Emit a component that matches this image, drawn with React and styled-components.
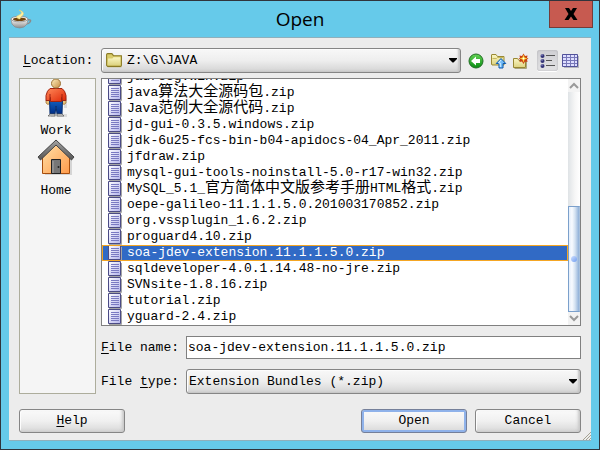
import React, { useState } from 'react';
import styled, { createGlobalStyle, css } from 'styled-components';

const GlobalStyle = createGlobalStyle`
  *, *::before, *::after { box-sizing: border-box; }
  body { margin: 0; }
  body, button, input, select {
    font-family: "Liberation Mono", "Noto Sans CJK SC", monospace;
    font-size: 13px;
    line-height: 16px;
    color: #000;
  }
`;

const Window = styled.div`
  display: flex;
  flex-direction: column;
  height: 100vh;
  min-height: 360px;
  padding: 0 8px 8px;
  border: 1px solid #30343c;
  background: #66caea;
`;

const TitleBar = styled.header`
  display: grid;
  grid-template-columns: 48px 1fr 48px;
  flex: none;
  height: 36px;
`;

const AppIcon = styled.svg`
  width: 22px;
  height: 22px;
  margin: 7px 0 0 1px;
`;

const Title = styled.h1`
  margin: 0;
  font: 400 19px/36px "Open Sans", "Noto Sans", sans-serif;
  text-align: center;
`;

const CloseButton = styled.button`
  display: grid;
  place-items: center;
  width: 44px;
  height: 27px;
  margin-left: 6px;
  padding: 0;
  border: 1px solid #743c3a;
  border-top: 0;
  background: #c75a50;
`;

const Content = styled.main`
  position: relative;
  display: flex;
  flex: 1;
  flex-direction: column;
  min-height: 0;
  padding: 10px 10px 7px;
  border: 1px solid #8fb0bc;
  border-width: 1px 0;
  background: #ececec;
`;

const LocationRow = styled.div`
  display: flex;
  flex: none;
  align-items: center;
  height: 25px;
  margin-bottom: 5px;
  padding-left: 4px;
`;

const Label = styled.label`
  flex: none;
  width: ${(p) => p.$width};
  white-space: pre;
`;

const Key = styled.span`
  text-decoration: underline;
  text-underline-offset: 2px;
`;

const Combo = styled.div`
  position: relative;
  flex: 1;
  height: 25px;
`;

const Select = styled.select`
  appearance: none;
  width: 100%;
  height: 100%;
  padding: 0 24px 0 ${(p) => (p.$withIcon ? '25px' : '2px')};
  border: 1px solid #858585;
  border-radius: 3px;
  background: linear-gradient(#f8f8f8, #eeeeee 50%, #d3d3d3);
  box-shadow: inset -2px -1px 2px #c4c4c4, inset 1px 1px 0 #fff;
  outline: none;
`;

const ComboArrow = styled.svg`
  position: absolute;
  top: 10px;
  right: 4px;
  width: 8px;
  height: 5px;
  pointer-events: none;
`;

const ComboIcon = styled.svg`
  position: absolute;
  top: 4px;
  left: 4px;
  width: 18px;
  height: 16px;
  pointer-events: none;
`;

const Tools = styled.div`
  display: flex;
  flex: none;
  align-items: center;
  gap: 2px;
  margin: 0 1px 0 5px;
`;

const ToolButton = styled.button`
  display: grid;
  place-items: center;
  width: 20px;
  height: 20px;
  padding: 0;
  border: 0;
  border-radius: 3px;
  background: none;
  ${(p) => p.$pressed && css`
    width: 21px;
    height: 21px;
    background: linear-gradient(#cfcfd3, #e2e2e4);
    box-shadow: inset 0 0 2px #a8a8ac, 0 1px 0 #fff;
  `}
`;

const ToolGap = styled.span`
  width: 3px;
`;

const Body = styled.div`
  display: flex;
  flex: 1;
  gap: 5px;
  min-height: 0;
`;

const Places = styled.nav`
  display: flex;
  flex: none;
  flex-direction: column;
  width: 77px;
  border: 1px solid #adad9c;
  background: #f5f5f5;
`;

const Place = styled.button`
  display: flex;
  flex-direction: column;
  align-items: center;
  height: 60px;
  padding: 0 3px 0 0;
  border: 0;
  background: none;
  svg { display: block; margin-bottom: 4px; }
`;

const Main = styled.div`
  display: flex;
  flex: 1;
  flex-direction: column;
  gap: 10px;
  min-width: 0;
`;

const FileBox = styled.div`
  display: flex;
  flex: 1;
  min-height: 0;
  border: 1px solid #808080;
  background: #fff;
`;

const FileList = styled.ul`
  display: flex;
  flex: 1;
  flex-direction: column;
  justify-content: flex-end;
  min-width: 0;
  margin: 0;
  padding: 0;
  overflow: hidden;
  list-style: none;
`;

const FileRow = styled.li`
  display: flex;
  flex: none;
  align-items: center;
  gap: 5px;
  height: 16px;
  padding-left: 6px;
  white-space: pre;
  ${(p) => p.$selected && css`
    background: #316ac5;
    outline: 1px solid #f5a623;
    outline-offset: -1px;
    color: #fff;
  `}
  svg { flex: none; }
`;

const Cjk = styled.span`
  font-size: 15px;
  line-height: 1;
`;

const Scrollbar = styled.div`
  display: flex;
  flex: none;
  flex-direction: column;
  width: 12px;
  background: linear-gradient(90deg, #dfe3e6, #f7f7f7 60%, #fff);
`;

const ScrollButton = styled.button`
  display: grid;
  place-items: center;
  flex: none;
  height: 13px;
  padding: 0;
  border: 0;
  background: #f3f3f3;
`;

const ScrollTrack = styled.div`
  display: grid;
  grid-template-rows: 115fr 106fr;
  flex: 1;
`;

const ScrollThumb = styled.div`
  display: grid;
  grid-row: 2;
  place-items: center;
  border: 1px solid #7ba0cc;
  border-right-color: #a9c1dc;
  background: linear-gradient(90deg, #e4eefa, #f8fbff 30%, #d5e3f2 60%, #8fb0d8);
  &::after {
    content: "";
    width: 6px;
    height: 6px;
    border-radius: 3px;
    background: linear-gradient(135deg, #cfe0ff, #6f9df0);
  }
`;

const Field = styled.div`
  display: flex;
  flex: none;
  align-items: center;
`;

const TextInput = styled.input`
  flex: 1;
  min-width: 0;
  height: 23px;
  padding: 0 1px;
  border: 1px solid #808080;
  border-radius: 0;
  background: #fff;
  outline: none;
`;

const Actions = styled.footer`
  display: flex;
  flex: none;
  gap: 8px;
  margin-top: 15px;
`;

const Button = styled.button`
  width: 106px;
  height: 24px;
  padding: 0;
  border: 1px solid #858585;
  border-radius: 3px;
  background: linear-gradient(#fafafa, #f0f0f0 50%, #d8d8d8);
  box-shadow: inset -2px -1px 3px #c8c8c8, inset 1px 1px 0 #fff;
  ${(p) => p.$primary && css`
    border-color: #75809a;
    box-shadow: inset 0 0 0 2px #8fb2ea, inset 0 -2px 0 #5f8bd0;
  `}
`;

const Spacer = styled.span`
  flex: 1;
`;

const Grip = styled.svg`
  position: absolute;
  right: 0;
  bottom: 0;
  width: 8px;
  height: 8px;
`;

const files = [
  'jadr88g.win.zip',
  'java算法大全源码包.zip',
  'Java范例大全源代码.zip',
  'jd-gui-0.3.5.windows.zip',
  'jdk-6u25-fcs-bin-b04-apidocs-04_Apr_2011.zip',
  'jfdraw.zip',
  'mysql-gui-tools-noinstall-5.0-r17-win32.zip',
  'MySQL_5.1_官方简体中文版参考手册HTML格式.zip',
  'oepe-galileo-11.1.1.5.0.201003170852.zip',
  'org.vssplugin_1.6.2.zip',
  'proguard4.10.zip',
  'soa-jdev-extension.11.1.1.5.0.zip',
  'sqldeveloper-4.0.1.14.48-no-jre.zip',
  'SVNsite-1.8.16.zip',
  'tutorial.zip',
  'yguard-2.4.zip',
];

const FileName = ({ name }) => (
  <span>
    {name.split(/([\u4e00-\u9fff]+)/).map((part, i) =>
      i % 2 ? <Cjk key={i}>{part}</Cjk> : part
    )}
  </span>
);

const Gradient = ({ id, from, to, x2 = 0, y2 = 1 }) => (
  <linearGradient id={id} x1="0" y1="0" x2={x2} y2={y2}>
    <stop offset="0" stopColor={from} />
    <stop offset="1" stopColor={to} />
  </linearGradient>
);

const CupIcon = () => (
  <AppIcon viewBox="0 0 22 22" aria-hidden="true">
    <defs><Gradient id="cup" from="#ffffff" to="#8c8c8c" /></defs>
    <path d="M17 12q5-1 3 2-1 2-4 2" fill="none" stroke="#8a8a8a" strokeWidth="1.5" />
    <path d="M1 11q0 6 4 8 5 2 9 0 4-2 4-8z" fill="url(#cup)" stroke="#858b8e" strokeWidth=".7" />
    <ellipse cx="9.500" cy="11" rx="8.500" ry="2.800" fill="#eee" stroke="#8b8b8b" strokeWidth=".8" />
    <ellipse cx="9.500" cy="11.300" rx="6.500" ry="1.700" fill="#70430b" />
    <path d="M9 11q-5-2 0-4 5-2 0-5 6 2 4 5-3 2-3 4z" fill="#fff1a2" stroke="#e6cf67" strokeWidth=".5" />
  </AppIcon>
);

const FolderShape = () => (
  <>
    <path d="M2.500 14.500V3q0-1.500 1.500-1.500h3.500L9 3.500h6.500v11z" fill="#b5a83f" opacity=".4" />
    <path d="M1.500 12.500v-10q0-1 1-1h4l1.500 2h7.500v9q0 1-1 1h-12z" fill="#d8cb6a" stroke="#8a7a24" />
    <path d="M2.500 12.500l.5-6.500h4l1-1h6.500v7.500z" fill="url(#folder)" />
  </>
);

const FolderIcon = () => (
  <ComboIcon viewBox="0 0 17 15" aria-hidden="true">
    <defs><Gradient id="folder" from="#faf6c2" to="#ddd381" /></defs>
    <FolderShape />
  </ComboIcon>
);

const BackIcon = () => (
  <svg width="16" height="16" viewBox="0 0 16 16">
    <defs><Gradient id="back" from="#65d454" to="#078b12" /></defs>
    <circle cx="8" cy="8" r="7" fill="url(#back)" stroke="#216d24" />
    <path d="M3 8l5-4.500v2.500h4v4H8v2.500z" fill="#fff" />
  </svg>
);

const UpIcon = () => (
  <svg width="17" height="16" viewBox="0 0 17 16">
    <path d="M1.500 11V2q0-.5.500-.5h4l1.500 2h6.500V12H2z" fill="url(#folder)" stroke="#9a8933" />
    <path d="M2.500 5.500h4l1-1h6" fill="none" stroke="#c7b85e" />
    <path d="M11 5.500l4.800 5H13v4.500H9v-4.500H6.200z" fill="#75bdf8" stroke="#0c59ad" strokeLinejoin="round" />
    <path d="M11 7l-2.500 3h1.800v4" fill="none" stroke="#d5f0ff" />
  </svg>
);

const NewFolderIcon = () => (
  <svg width="17" height="16" viewBox="0 0 17 16">
    <path d="M1.500 14.500V5.500h4L7 7.500h6.500v7z" fill="url(#folder)" stroke="#978732" />
    <path d="M14.500 8v7.500h-12" fill="none" stroke="#a9a47e" />
    <path d="M11.500.5l1.500 2.500 2.500-.5-.5 2.500 1.500.5-1.500 1 .5 2.500-2.500-.5-1.500 2.500-1.500-2.500-2.500.5.500-2.500-1.500-1 1.500-.5-.5-2.500 2.500.5z" fill="#c93f12" />
    <path d="M11.500 1.500l1 3 3 1-3 1-1 3-1-3-3-1 3-1z" fill="#ffdb37" />
    <circle cx="11.500" cy="5.500" r="1" fill="#fff" />
  </svg>
);

const ListIcon = () => (
  <svg width="17" height="16" viewBox="0 0 17 16">
    {[3, 8, 13].map((y) => (
      <g key={y}>
        <circle cx="3.500" cy={y} r="2" fill="#343477" />
        <circle cx="3" cy={y - 1} r=".7" fill="#b4b4e8" />
        <path d={`M7 ${y - 0.5}h${y === 8 ? 6 : 9}`} stroke="#555" />
      </g>
    ))}
  </svg>
);

const GridIcon = () => (
  <svg width="17" height="14" viewBox="0 0 17 14">
    <path d="M2 2h15v12H2z" fill="#b5b5bd" />
    <path d="M.5.5h15v12H.5z" fill="#dedeff" stroke="#51519a" />
    <path d="M1 3.500h14M1 6.500h14M1 9.500h14M4.500 1v11M8.500 1v11M12.500 1v11" stroke="#7777b8" />
  </svg>
);

const PersonIcon = () => (
  <svg width="24" height="40" viewBox="0 0 24 40">
    <defs>
      <Gradient id="shirt" from="#ff8a5a" to="#de2505" x2={1} />
      <Gradient id="trousers" from="#1768c8" to="#002d86" />
      <Gradient id="skin" from="#fff1bf" to="#c58b42" x2={1} />
    </defs>
    <path d="M7 35h16v3H7zM20 14l3 6v9h-3z" fill="#777" opacity=".2" />
    <path d="M2 21h4v3q-2 3-4 0zM18 21h4v3q-2 3-4 0z" fill="#e9c27b" stroke="#966a31" strokeWidth=".7" />
    <path d="M5.500 19h13l-.5 16h-5l-1-8-1 8h-5z" fill="url(#trousers)" stroke="#062d70" />
    <path d="M6 35h5v2H4zM13 35h5l2 2h-7z" fill="#ddd" stroke="#555" strokeWidth=".7" />
    <path d="M6 9.500h12q3 2 4 7v5h-4l-.5-3v4h-11v-4l-.5 3H2v-5q1-5 4-7z" fill="url(#shirt)" stroke="#a02310" />
    <path d="M6 15v6M18 15v6" stroke="#a02310" />
    <circle cx="12" cy="4.500" r="4.500" fill="url(#skin)" stroke="#9c7438" />
  </svg>
);

const HouseIcon = () => (
  <svg width="38" height="40" viewBox="0 0 38 40">
    <defs>
      <Gradient id="wall" from="#ffe1a8" to="#ff9b4b" x2={1} />
      <Gradient id="roof" from="#a2a2a2" to="#555555" />
    </defs>
    <path d="M8 20h27v16H8z" fill="#777" opacity=".25" />
    <path d="M5.500 18L19 5l13.500 13v16.500h-27z" fill="url(#wall)" stroke="#a64d0d" />
    <path d="M1 18L19 1l18 17-2.500 3L19 6 3.500 21z" fill="url(#roof)" stroke="#444" />
    <path d="M14.500 20.500h9v14h-9z" fill="#777" stroke="#222" />
    <path d="M16 22v12" stroke="#aaa" />
    <circle cx="21.500" cy="28" r="1" fill="#222" />
  </svg>
);

const FileIcon = () => (
  <svg width="14" height="16" viewBox="0 0 14 16" aria-hidden="true">
    <defs><Gradient id="sheet" from="#ffffff" to="#b4b4ec" x2={1} /></defs>
    <path d="M1 15.500h12.500V2" fill="none" stroke="#a4a4a4" />
    <path d="M.5.500h12v14H.5z" fill="url(#sheet)" stroke="#4b4b86" />
    <path d="M3 3.500h8M3 5.500h8M3 7.500h8M3 9.500h8M3 11.500h8" stroke="#7a7ac2" />
  </svg>
);

const Chevron = ({ down }) => (
  <svg width="10" height="7" viewBox="0 0 10 7" aria-hidden="true">
    <path d={down ? 'M1 1l4 4 4-4' : 'M1 6l4-4 4 4'} fill="none" stroke="#999" strokeWidth="2" />
  </svg>
);

const Arrow = () => (
  <ComboArrow viewBox="0 0 8 5" aria-hidden="true">
    <path d="M0 0h8v1L4.500 4.500h-1L0 1z" fill="#000" />
  </ComboArrow>
);

export default function App() {
  const [selected, setSelected] = useState('soa-jdev-extension.11.1.1.5.0.zip');

  return (
    <>
      <GlobalStyle />
      <Window>
        <TitleBar>
          <CupIcon />
          <Title>Open</Title>
          <CloseButton type="button" aria-label="Close">
            <svg width="14" height="12" viewBox="0 0 14 12">
              <path d="M1 0h4l2 3 2-3h4L9.500 6l4 6h-4L7 8.500 4.500 12h-4l4-6z" fill="#000" />
            </svg>
          </CloseButton>
        </TitleBar>
        <Content>
          <LocationRow>
            <Label htmlFor="location" $width="78px"><Key>L</Key>ocation:</Label>
            <Combo>
              <Select id="location" $withIcon>
                <option>Z:\G\JAVA</option>
              </Select>
              <FolderIcon />
              <Arrow />
            </Combo>
            <Tools>
              <ToolButton type="button" aria-label="Back"><BackIcon /></ToolButton>
              <ToolButton type="button" aria-label="Up one level"><UpIcon /></ToolButton>
              <ToolButton type="button" aria-label="New folder"><NewFolderIcon /></ToolButton>
              <ToolGap />
              <ToolButton type="button" aria-label="List" aria-pressed="true" $pressed><ListIcon /></ToolButton>
              <ToolButton type="button" aria-label="Details" aria-pressed="false"><GridIcon /></ToolButton>
            </Tools>
          </LocationRow>
          <Body>
            <Places>
              <Place type="button"><PersonIcon />Work</Place>
              <Place type="button"><HouseIcon />Home</Place>
            </Places>
            <Main>
              <FileBox>
                <FileList role="listbox" aria-label="Files">
                  {files.map((name) => (
                    <FileRow
                      key={name}
                      role="option"
                      aria-selected={name === selected}
                      $selected={name === selected}
                      onClick={() => setSelected(name)}
                    >
                      <FileIcon />
                      <FileName name={name} />
                    </FileRow>
                  ))}
                </FileList>
                <Scrollbar>
                  <ScrollButton type="button" aria-label="Scroll up"><Chevron /></ScrollButton>
                  <ScrollTrack><ScrollThumb /></ScrollTrack>
                  <ScrollButton type="button" aria-label="Scroll down"><Chevron down /></ScrollButton>
                </Scrollbar>
              </FileBox>
              <Field>
                <Label htmlFor="file-name" $width="85px"><Key>F</Key>ile name:</Label>
                <TextInput id="file-name" value={selected} onChange={(e) => setSelected(e.target.value)} />
              </Field>
              <Field>
                <Label htmlFor="file-type" $width="85px">File <Key>t</Key>ype:</Label>
                <Combo>
                  <Select id="file-type">
                    <option>Extension Bundles (*.zip)</option>
                  </Select>
                  <Arrow />
                </Combo>
              </Field>
            </Main>
          </Body>
          <Actions>
            <Button type="button"><Key>H</Key>elp</Button>
            <Spacer />
            <Button type="button" $primary>Open</Button>
            <Button type="button">Cancel</Button>
          </Actions>
          <Grip viewBox="0 0 8 8" aria-hidden="true">
            <path d="M0 8l8-8M3 8l5-5M6 8l2-2" stroke="#a5a292" />
          </Grip>
        </Content>
      </Window>
    </>
  );
}
